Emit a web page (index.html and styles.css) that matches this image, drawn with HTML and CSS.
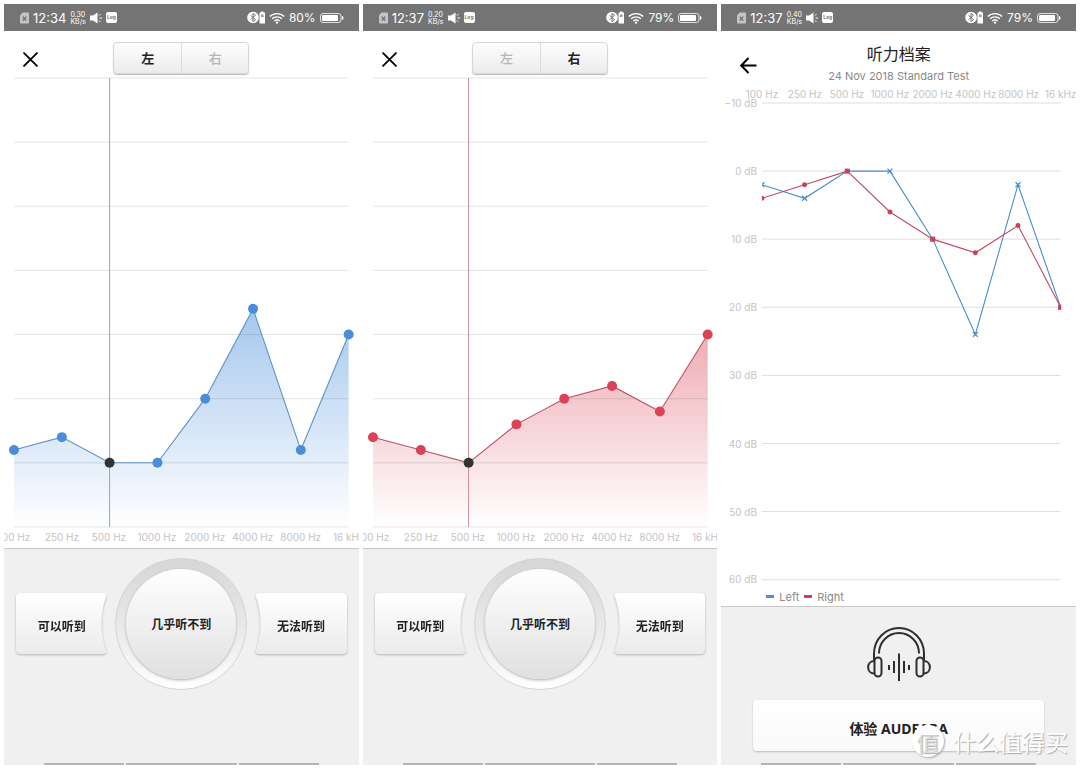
FILE: index.html
```html
<!DOCTYPE html>
<html lang="zh-CN">
<head>
<meta charset="utf-8">
<meta name="viewport" content="width=device-width, initial-scale=1">
<title>听力档案</title>
<link rel="stylesheet" href="styles.css">
</head>
<body>
<svg class="defs" width="0" height="0" aria-hidden="true">
  <defs>
    <symbol id="i-sim" viewBox="0 0 10 12">
      <path d="M3 0H9a1 1 0 0 1 1 1V11a1 1 0 0 1-1 1H1a1 1 0 0 1-1-1V3z" fill="#c4c4c4"/>
      <path d="M3 4.500l4 4.500M7 4.500L3 9" stroke="#666" stroke-width="1.300"/>
    </symbol>
    <symbol id="i-sound" viewBox="0 0 12 12">
      <path d="M0 3.500h3L7.500 .5v11L3 8.500H0z" fill="#fff"/>
      <path d="M9 3.500L10.500 2M9.500 6H12M9 8.500L10.500 10" stroke="#fff" stroke-width="1"/>
    </symbol>
    <symbol id="i-bt" viewBox="0 0 18 12">
      <circle cx="6" cy="6" r="5.800" fill="#fff"/>
      <path d="M3.500 3.800l5 4.400L6 10.200V1.800l2.500 2-5 4.400" fill="none" stroke="#747474" stroke-width="1"/>
      <path d="M14 0h2.500v1H18v11h-5.500V1H14z" fill="#fff"/>
      <path d="M14 3h2.500v2.500H14z" fill="#999"/>
    </symbol>
    <symbol id="i-wifi" viewBox="0 0 15 11">
      <path d="M.8 4.200a9.500 9.500 0 0 1 13.400 0M2.900 6.300a6.500 6.500 0 0 1 9.200 0M5 8.300a3.600 3.600 0 0 1 5 0" fill="none" stroke="#fff" stroke-width="1.300"/>
      <circle cx="7.500" cy="9.800" r="1.100" fill="#fff"/>
    </symbol>
    <symbol id="i-battery" viewBox="0 0 24 10">
      <rect x=".5" y=".5" width="20.500" height="9" rx="2.500" fill="none" stroke="#fff" stroke-opacity=".8"/>
      <rect x="2" y="2" width="16" height="6" rx="1" fill="#fff"/>
      <path d="M22 3q1.500 0 1.500 2T22 7z" fill="#fff"/>
    </symbol>
    <symbol id="i-close" viewBox="0 0 14 14">
      <path d="M1 1l12 12M13 1L1 13" stroke="#000" stroke-width="1.700" stroke-linecap="round"/>
    </symbol>
    <symbol id="i-back" viewBox="0 0 16 16">
      <path d="M15.500 8H1.500M8 1L1.200 8 8 15" fill="none" stroke="#000" stroke-width="1.900"/>
    </symbol>
    <linearGradient id="blue-fill" x1="0" y1="233" x2="0" y2="451" gradientUnits="userSpaceOnUse">
      <stop offset="0" stop-color="#4a8edb" stop-opacity=".5"/>
      <stop offset="1" stop-color="#4a8edb" stop-opacity="0"/>
    </linearGradient>
    <linearGradient id="red-fill" x1="0" y1="259" x2="0" y2="451" gradientUnits="userSpaceOnUse">
      <stop offset="0" stop-color="#d94355" stop-opacity=".44"/>
      <stop offset="1" stop-color="#d94355" stop-opacity="0"/>
    </linearGradient>
    <g id="grid">
      <path d="M10 2H345M10 66.200H345M10 130.400H345M10 194.600H345M10 258.800H345M10 323H345M10 387.200H345M10 451.400H345" stroke="#000" stroke-opacity=".11"/>
    </g>
    <g id="x-mark"><path d="M-2.500-2.500l5 5M2.500-2.500l-5 5" stroke="#4a8cc8" stroke-width="1.200"/></g>
  </defs>
</svg>

<main class="phones">
  <section class="phone">
    <div class="status">
      <svg class="sim"><use href="#i-sim"/></svg>
      <span class="clock">12:34</span>
      <span class="rate"><span>0.30</span><span>KB/s</span></span>
      <svg class="sound"><use href="#i-sound"/></svg>
      <span class="log">Log</span>
      <svg class="bt"><use href="#i-bt"/></svg>
      <svg class="wifi"><use href="#i-wifi"/></svg>
      <span class="percent">80%</span>
      <svg class="battery"><use href="#i-battery"/></svg>
    </div>
    <header class="toolbar">
      <button class="icon-button" type="button" aria-label="关闭"><svg class="close"><use href="#i-close"/></svg></button>
      <div class="segmented">
        <button class="segment active" type="button">左</button>
        <button class="segment" type="button">右</button>
      </div>
    </header>
    <svg class="chart" viewBox="0 0 355 472" role="img" aria-label="左耳听力图">
      <path d="M10 374.400L57.900 361.500 105.700 387.200 153.600 387.200 201.400 323 249.300 233.100 297.100 374.400 345 258.800V451.400H10z" fill="url(#blue-fill)"/>
      <use href="#grid"/>
      <path d="M105.700 2V451.400" stroke="#7fabd0" stroke-width="1"/>
      <path d="M10 374.400L57.900 361.500 105.700 387.200 153.600 387.200 201.400 323 249.300 233.100 297.100 374.400 345 258.800" fill="none" stroke="#5c93c6" stroke-width="1.100"/>
      <g fill="#4a8edb">
        <circle cx="10" cy="374.400" r="5"/><circle cx="57.900" cy="361.500" r="5"/>
        <circle cx="153.600" cy="387.200" r="5"/><circle cx="201.400" cy="323" r="5"/>
        <circle cx="249.300" cy="233.100" r="5"/><circle cx="297.100" cy="374.400" r="5"/><circle cx="345" cy="258.800" r="5"/>
      </g>
      <circle cx="105.700" cy="387.200" r="5" fill="#333"/>
      <g class="axis">
        <text x="10" y="465">100 Hz</text><text x="58" y="465">250 Hz</text><text x="105" y="465">500 Hz</text><text x="153" y="465">1000 Hz</text>
        <text x="201" y="465">2000 Hz</text><text x="249" y="465">4000 Hz</text><text x="297" y="465">8000 Hz</text><text x="345" y="465">16 kHz</text>
      </g>
    </svg>
    <div class="panel">
      <div class="answers">
        <div class="side"><button class="answer answer-left" type="button">可以听到</button></div>
        <div class="dial"><button class="dial-button" type="button">几乎听不到</button></div>
        <div class="side"><button class="answer answer-right" type="button">无法听到</button></div>
      </div>
      <div class="navbar"><span></span><span class="home"></span><span></span></div>
    </div>
  </section>

  <section class="phone">
    <div class="status">
      <svg class="sim"><use href="#i-sim"/></svg>
      <span class="clock">12:37</span>
      <span class="rate"><span>0.20</span><span>KB/s</span></span>
      <svg class="sound"><use href="#i-sound"/></svg>
      <span class="log">Log</span>
      <svg class="bt"><use href="#i-bt"/></svg>
      <svg class="wifi"><use href="#i-wifi"/></svg>
      <span class="percent">79%</span>
      <svg class="battery"><use href="#i-battery"/></svg>
    </div>
    <header class="toolbar">
      <button class="icon-button" type="button" aria-label="关闭"><svg class="close"><use href="#i-close"/></svg></button>
      <div class="segmented">
        <button class="segment" type="button">左</button>
        <button class="segment active" type="button">右</button>
      </div>
    </header>
    <svg class="chart" viewBox="0 0 355 472" role="img" aria-label="右耳听力图">
      <path d="M10 361.500L57.900 374.400 105.700 387.200 153.600 348.700 201.400 323 249.300 310.200 297.100 335.800 345 258.800V451.400H10z" fill="url(#red-fill)"/>
      <use href="#grid"/>
      <path d="M105.700 2V451.400" stroke="#cb8d98" stroke-width="1"/>
      <path d="M10 361.500L57.900 374.400 105.700 387.200 153.600 348.700 201.400 323 249.300 310.200 297.100 335.800 345 258.800" fill="none" stroke="#bd5468" stroke-width="1.100"/>
      <g fill="#d94355">
        <circle cx="10" cy="361.500" r="5"/><circle cx="57.900" cy="374.400" r="5"/>
        <circle cx="153.600" cy="348.700" r="5"/><circle cx="201.400" cy="323" r="5"/>
        <circle cx="249.300" cy="310.200" r="5"/><circle cx="297.100" cy="335.800" r="5"/><circle cx="345" cy="258.800" r="5"/>
      </g>
      <circle cx="105.700" cy="387.200" r="5" fill="#333"/>
      <g class="axis">
        <text x="10" y="465">100 Hz</text><text x="58" y="465">250 Hz</text><text x="105" y="465">500 Hz</text><text x="153" y="465">1000 Hz</text>
        <text x="201" y="465">2000 Hz</text><text x="249" y="465">4000 Hz</text><text x="297" y="465">8000 Hz</text><text x="345" y="465">16 kHz</text>
      </g>
    </svg>
    <div class="panel">
      <div class="answers">
        <div class="side"><button class="answer answer-left" type="button">可以听到</button></div>
        <div class="dial"><button class="dial-button" type="button">几乎听不到</button></div>
        <div class="side"><button class="answer answer-right" type="button">无法听到</button></div>
      </div>
      <div class="navbar"><span></span><span class="home"></span><span></span></div>
    </div>
  </section>

  <section class="phone phone-profile">
    <div class="status">
      <svg class="sim"><use href="#i-sim"/></svg>
      <span class="clock">12:37</span>
      <span class="rate"><span>0.40</span><span>KB/s</span></span>
      <svg class="sound"><use href="#i-sound"/></svg>
      <span class="log">Log</span>
      <svg class="bt"><use href="#i-bt"/></svg>
      <svg class="wifi"><use href="#i-wifi"/></svg>
      <span class="percent">79%</span>
      <svg class="battery"><use href="#i-battery"/></svg>
    </div>
    <header class="profile-header">
      <button class="icon-button" type="button" aria-label="返回"><svg class="back"><use href="#i-back"/></svg></button>
      <div class="titles">
        <h1>听力档案</h1>
        <p>24 Nov 2018 Standard Test</p>
      </div>
    </header>
    <svg class="chart chart-profile" viewBox="0 0 355 502" role="img" aria-label="听力档案图">
      <path d="M41 17H340M41 85.200H340M41 153.300H340M41 221.500H340M41 289.700H340M41 357.800H340M41 426H340M41 494.200H340" stroke="#dedede"/>
      <g class="axis">
        <text x="41" y="12">100 Hz</text><text x="84" y="12">250 Hz</text><text x="126" y="12">500 Hz</text><text x="169" y="12">1000 Hz</text>
        <text x="212" y="12">2000 Hz</text><text x="255" y="12">4000 Hz</text><text x="298" y="12">8000 Hz</text><text x="340" y="12">16 kHz</text>
      </g>
      <g class="axis axis-y">
        <text x="36" y="21">−10 dB</text><text x="36" y="89">0 dB</text><text x="36" y="157">10 dB</text><text x="36" y="225">20 dB</text>
        <text x="36" y="293">30 dB</text><text x="36" y="362">40 dB</text><text x="36" y="430">50 dB</text><text x="36" y="498">60 dB</text>
      </g>
      <clipPath id="plot"><rect x="41" y="17" width="299.500" height="478"/></clipPath>
      <g clip-path="url(#plot)">
        <path d="M41 98.800L83.700 112.400 126.400 85.200 169.100 85.200 211.900 153.300 254.600 248.700 297.300 98.800 340 221.500" fill="none" stroke="#4a8cc8" stroke-width="1.100"/>
        <use href="#x-mark" x="41" y="98.800"/><use href="#x-mark" x="83.700" y="112.400"/><use href="#x-mark" x="126.400" y="85.200"/><use href="#x-mark" x="169.100" y="85.200"/>
        <use href="#x-mark" x="211.900" y="153.300"/><use href="#x-mark" x="254.600" y="248.700"/><use href="#x-mark" x="297.300" y="98.800"/><use href="#x-mark" x="340" y="221.500"/>
        <path d="M41 112.400L83.700 98.800 126.400 85.200 169.100 126.100 211.900 153.300 254.600 167 297.300 139.700 340 221.500" fill="none" stroke="#c04a62" stroke-width="1.100"/>
        <g fill="#cc405a">
          <circle cx="41" cy="112.400" r="2.500"/><circle cx="83.700" cy="98.800" r="2.500"/><circle cx="126.400" cy="85.200" r="2.700"/><circle cx="169.100" cy="126.100" r="2.500"/>
          <circle cx="211.900" cy="153.300" r="2.700"/><circle cx="254.600" cy="167" r="2.500"/><circle cx="297.300" cy="139.700" r="2.500"/><circle cx="340" cy="221.500" r="2.700"/>
        </g>
      </g>
    </svg>
    <div class="legend"><i class="swatch swatch-blue"></i><span>Left</span><i class="swatch swatch-red"></i><span>Right</span></div>
    <div class="panel panel-profile">
      <svg class="headphones" viewBox="0 0 64 54" fill="none" stroke="#2e2e2e" stroke-width="2" aria-hidden="true">
        <path d="M7 33V26.500a25 25.500 0 0 1 50 0V33"/>
        <path d="M12 26.500a20 20.500 0 0 1 40 0"/>
        <rect x="7.500" y="30.500" width="7" height="19" rx="3.500"/>
        <rect x="49.500" y="30.500" width="7" height="19" rx="3.500"/>
        <path d="M7.500 34C-1 34-1 46.500 7.500 46.500M56.500 34c8.500 0 8.500 12.500 0 12.500"/>
        <path d="M32 26.500v27.500M27 34v12M37 34v12M22 38v5M42 38v5"/>
      </svg>
      <button class="primary" type="button">体验 AUDEARA</button>
      <div class="watermark">
        <svg class="ears" viewBox="0 0 32 12" aria-hidden="true"><path d="M3 12L5 5l4-3 2 3 2-3 3 2 2-2 3 3 4-2 1 3 3 6z" fill="#fdfdfd"/></svg>
        <span class="seal">值</span><span>什么值得买</span>
      </div>
      <div class="navbar"><span></span><span class="home"></span><span></span></div>
    </div>
  </section>
</main>
</body>
</html>
```
FILE: styles.css
```css
* { box-sizing: border-box; }

body {
  margin: 0;
  background: #fff;
  color: #222;
  font-family: Inter, "Noto Sans CJK SC", sans-serif;
}

button {
  border: 0;
  padding: 0;
  background: none;
  color: inherit;
  font: inherit;
}

.defs { position: absolute; }

.phones {
  display: grid;
  grid-template-columns: repeat(3, 1fr);
  gap: 4px;
  min-height: 100vh;
  padding: 4px;
}

.phone {
  display: flex;
  flex-direction: column;
  min-width: 0;
  overflow: hidden;
}

.phone-profile { overflow: visible; }

/* Status bar */
.status {
  display: flex;
  align-items: center;
  gap: 4px;
  height: 27px;
  padding: 0 15px 0 16px;
  background: #747474;
  color: #fff;
}

.sim { width: 9px; height: 12px; }
.clock { font-size: 13px; }
.rate {
  display: flex;
  flex-direction: column;
  font-size: 7px;
  line-height: 7px;
}
.sound { width: 12px; height: 12px; }
.log {
  padding: 0 1px;
  border-radius: 2px;
  background: #fff;
  color: #747474;
  font-size: 5px;
  font-weight: 700;
  line-height: 11px;
}
.bt { width: 18px; height: 13px; margin-left: auto; }
.wifi { width: 16px; height: 12px; }
.percent { font-size: 12px; }
.battery { width: 24px; height: 10px; }

/* Toolbars */
.toolbar {
  display: grid;
  grid-template-columns: 1fr auto 1fr;
  align-items: center;
  height: 45px;
  padding: 8px 19px 0;
}

.icon-button {
  display: flex;
  justify-self: start;
}
.toolbar .icon-button { padding-top: 4px; }
.close { width: 15px; height: 15px; }
.back { width: 17px; height: 17px; }

.segmented {
  display: flex;
  border: 1px solid #d6d6d6;
  border-radius: 4px;
  background: linear-gradient(#fdfdfd, #ececec);
  box-shadow: 0 1px 1px #bbb;
}
.segment {
  width: 67px;
  height: 30px;
  color: #b4b4b4;
  font-size: 13px;
  font-weight: 500;
}
.segment + .segment { border-left: 1px solid #dcdcdc; }
.segment.active { color: #222; font-weight: 700; }

.profile-header {
  display: grid;
  grid-template-columns: 1fr auto 1fr;
  align-items: center;
  height: 55px;
  padding: 12px 19px 0;
}
.titles { text-align: center; }
.titles h1 {
  margin: 0;
  font-size: 16px;
  font-weight: 400;
  line-height: 22px;
}
.titles p {
  margin: 0;
  color: #888;
  font-size: 11px;
  line-height: 22px;
}

/* Charts */
.chart {
  display: block;
  width: 100%;
}
.chart-profile { overflow: visible; }
.axis {
  fill: #c4c4c4;
  font-size: 10px;
  text-anchor: middle;
}
.axis-y { text-anchor: end; }

.legend {
  display: flex;
  align-items: center;
  gap: 5px;
  padding-left: 45px;
  color: #888;
  font-size: 11px;
  line-height: 18px;
}
.swatch { width: 8px; height: 3px; }
.swatch-blue { background: #4a8edb; }
.swatch-red { background: #cc405a; }

/* Bottom panels */
.panel {
  position: relative;
  display: flex;
  flex: 1;
  flex-direction: column;
  border-top: 1px solid #c8c8c8;
  background: #f0f0f0;
}

.answers {
  display: flex;
  align-items: center;
  gap: 8px;
  padding: 9px 12px;
}
.side {
  flex: 1;
  filter: drop-shadow(0 1px 1px #b4b4b4);
}
.answer {
  display: block;
  width: 100%;
  height: 61px;
  padding-top: 4px;
  border-radius: 4px;
  background: linear-gradient(#fff, #ebebeb);
  font-size: 12px;
  font-weight: 700;
}
.answer-left {
  mask-image: radial-gradient(circle at calc(100% + 74px) 50%, transparent 79px, #000 80px);
}
.answer-right {
  mask-image: radial-gradient(circle at -74px 50%, transparent 79px, #000 80px);
}

.dial {
  display: flex;
  padding: 10px;
  border: 1px solid #d4d4d4;
  border-radius: 50%;
  background: linear-gradient(#d6d6d6, #ececec 60%, #fff);
}
.dial-button {
  width: 110px;
  height: 110px;
  border-radius: 50%;
  background: linear-gradient(#fff, #e0e0e0);
  box-shadow: 0 1px 3px #aaa;
  font-size: 12px;
  font-weight: 700;
}

.navbar {
  display: grid;
  grid-template-columns: 80fr 111fr 80fr;
  gap: 2px;
  margin-top: auto;
  padding: 0 40px;
}
.navbar span {
  height: 2px;
  background: #b5b5b5;
}

.panel-profile { align-items: center; }
.headphones {
  width: 64px;
  height: 54px;
  margin-top: 20px;
}
.primary {
  width: calc(100% - 63px);
  height: 51px;
  margin-top: 19px;
  padding-top: 6px;
  border-radius: 4px;
  background: linear-gradient(#fff, #f9f9f9);
  box-shadow: 0 1px 2px #bbb;
  font-family: "Noto Sans", "Noto Sans CJK SC", sans-serif;
  font-size: 14px;
  font-weight: 700;
}
.panel-profile .navbar { align-self: stretch; }

/* Watermark laid over the profile panel */
.watermark {
  position: absolute;
  right: 8px;
  bottom: 8px;
  display: flex;
  align-items: center;
  gap: 9px;
  color: #fff;
  font-family: "Noto Sans CJK SC", sans-serif;
  font-size: 23px;
  line-height: 32px;
  text-shadow: 1px 1px 1px #aaa;
}
.seal {
  width: 32px;
  height: 32px;
  border-radius: 50%;
  background: #fff;
  box-shadow: 1px 1px 2px #aaa;
  color: #ddd;
  text-align: center;
}
.ears {
  position: absolute;
  top: -2px;
  left: 0;
  width: 32px;
  height: 12px;
}
```
